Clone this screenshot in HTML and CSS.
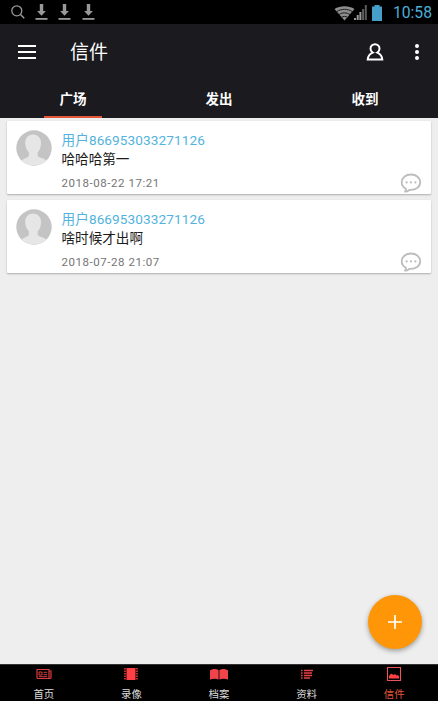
FILE: index.html
```html
<!DOCTYPE html>
<html lang="zh-CN">
<head>
    <meta charset="UTF-8">
    <meta name="viewport" content="width=device-width, initial-scale=1.0">
    <title>信件</title>
    <link rel="stylesheet" href="styles.css">
</head>
<body>
    <!-- 图标 -->
    <svg class="icon-defs" width="0" height="0">
        <symbol id="download" viewBox="0 0 13 17">
            <path d="M4.8 0h3.4v7h2.7L6.5 11.7 2.1 7h2.7z"/>
            <path d="M.5 14h12v1.8H.5z"/>
        </symbol>
        <symbol id="avatar" viewBox="0 0 36 36">
            <circle cx="18" cy="18" r="17.7" fill="#c4c4c4"/>
            <path d="M17 4.5c-5 0-7.8 3.6-7.8 8.5 0 4.5 2 7.5 3.7 9.3v3.2c0 2-3.9 2.4-7.2 4.9A17.7 17.7 0 0 0 30.3 30.4c-3.3-2.5-8.6-2.900-8.600-4.900v-3.200c1.700-1.800 3.400-4.800 3.400-9.300 0-4.900-3.100-8.500-8.100-8.500z" fill="#e6e6e6"/>
        </symbol>
        <symbol id="comment" viewBox="0 0 22 20">
            <path d="M11 1.5c-5.300 0-9.300 3.300-9.300 7.800 0 2.900 1.600 5.200 4.300 6.500-.1 1.200-.4 2-1 2.900 2 0 3.300-.8 4.300-1.900 6.300.6 10.900-2.800 10.900-7.500 0-4.500-3.900-7.800-9.200-7.800z" fill="none" stroke="#bdbdbf" stroke-width="1.8" stroke-linejoin="round"/>
            <circle cx="6.600" cy="9.400" r="1.100"/>
            <circle cx="11" cy="9.400" r="1.100"/>
            <circle cx="15.400" cy="9.400" r="1.100"/>
        </symbol>
    </svg>

    <!-- 状态栏 -->
    <div class="status-bar">
        <div class="status-left">
            <svg class="icon-search" width="15" height="15" viewBox="0 0 15 15">
                <circle cx="5.800" cy="5.800" r="5" fill="none" stroke="#999" stroke-width="1.300"/>
                <path d="M9.500 9.500l3.700 3.700" stroke="#999" stroke-width="1.500"/>
            </svg>
            <svg class="icon-download"><use href="#download"/></svg>
            <svg class="icon-download"><use href="#download"/></svg>
            <svg class="icon-download"><use href="#download"/></svg>
        </div>
        <div class="status-right">
            <svg class="icon-wifi" width="21" height="16" viewBox="0 0 21 16">
                <path d="M10.500 15.500L.5 4C6 .2 15 .2 20.500 4z" fill="#8d8d8d"/>
                <path d="M2.500 6.800c4.600-3.300 11.400-3.300 16 0M5 9.600c3.300-2.300 7.700-2.300 11 0M7.500 12.300c1.800-1.200 4.200-1.200 6 0" fill="none" stroke="#1c1c1c" stroke-width="1"/>
            </svg>
            <svg class="icon-signal" width="13" height="15" viewBox="0 0 13 15">
                <path d="M0 13h2v2H0zM2.700 10h2v5h-2zM5.400 7h2v8h-2z" fill="#999"/>
                <path d="M8.100 4h2v11h-2zM10.800 0h2v15h-2z" fill="#5c5c5c"/>
            </svg>
            <svg class="icon-battery" width="10" height="16" viewBox="0 0 10 16">
                <path d="M2.500 0h5v1.500H10V16H0V1.500h2.500z" fill="#459fc9"/>
            </svg>
            <span class="clock">10:58</span>
        </div>
    </div>

    <!-- 标题栏 -->
    <header class="header">
        <div class="toolbar">
            <svg class="icon-menu" width="18" height="14" viewBox="0 0 18 14">
                <path d="M0 1h18M0 7h18M0 13h18" stroke="#fff" stroke-width="2"/>
            </svg>
            <h1 class="title">信件</h1>
            <svg class="icon-user" width="18" height="18" viewBox="0 0 18 18">
                <path d="M6.700 9.600C5.300 8.700 4.500 7.400 4.500 5.700 4.500 3.100 6.500 1.200 9 1.200s4.500 1.900 4.500 4.500c0 1.700-.8 3-2.200 3.900 2.800 1 4.700 3.600 5 7H1.700c.3-3.400 2.200-6 5-7z" fill="none" stroke="#fff" stroke-width="2"/>
            </svg>
            <svg class="icon-more" width="4" height="16" viewBox="0 0 4 16">
                <circle cx="2" cy="2" r="2"/>
                <circle cx="2" cy="8" r="2"/>
                <circle cx="2" cy="14" r="2"/>
            </svg>
        </div>
        <nav class="tabs">
            <a class="tab active">广场</a>
            <a class="tab">发出</a>
            <a class="tab">收到</a>
        </nav>
    </header>

    <!-- 信件列表 -->
    <main class="list">
        <article class="card">
            <svg class="avatar"><use href="#avatar"/></svg>
            <div class="card-body">
                <div class="name">用户866953033271126</div>
                <div class="message">哈哈哈第一</div>
                <div class="date">2018-08-22 17:21</div>
            </div>
            <svg class="icon-comment"><use href="#comment"/></svg>
        </article>
        <article class="card">
            <svg class="avatar"><use href="#avatar"/></svg>
            <div class="card-body">
                <div class="name">用户866953033271126</div>
                <div class="message">啥时候才出啊</div>
                <div class="date">2018-07-28 21:07</div>
            </div>
            <svg class="icon-comment"><use href="#comment"/></svg>
        </article>
    </main>

    <button type="button" class="fab">
        <svg width="14" height="14" viewBox="0 0 14 14">
            <path d="M7 0v14M0 7h14" stroke="#fff" stroke-width="1.700"/>
        </svg>
    </button>

    <!-- 底部导航 -->
    <nav class="bottom-nav">
        <a class="nav-item">
            <svg width="16" height="16" viewBox="0 0 16 16">
                <path d="M1 3.500h12v9H2a1 1 0 0 1-1-1zM13 5h2v6.500a1 1 0 0 1-1 1h-1" fill="none" stroke="#d93b40" stroke-width="1.200"/>
                <path d="M3 6h3v3H3zM7.500 6.300H11M7.500 8.700H11M3 10.700h8" fill="none" stroke="#d93b40"/>
            </svg>
            <span>首页</span>
        </a>
        <a class="nav-item">
            <svg width="16" height="16" viewBox="0 0 16 16">
                <path d="M3.500 2h9v12h-9z" fill="#ff4146"/>
                <path d="M2 2v12M14 2v12" stroke="#e23b40" stroke-width="1.600" stroke-dasharray="1.500 1"/>
            </svg>
            <span>录像</span>
        </a>
        <a class="nav-item">
            <svg width="18" height="16" viewBox="0 0 18 16">
                <path d="M0 4.500C2.500 2.500 6 2.500 8.600 4v9.500C6 12.500 3 12.500 0 13.500zM9.400 4c2.600-1.500 6.100-1.500 8.600.5v9c-3-1-6-1-8.600 0z" fill="#f0444a"/>
            </svg>
            <span>档案</span>
        </a>
        <a class="nav-item">
            <svg width="16" height="16" viewBox="0 0 16 16">
                <path d="M5 4.500h9M5 7h8M5 9.500h8M5 12h6" stroke="#e64046" stroke-width="1.400"/>
                <path d="M2 4.500h1.600M2 7h1.600M2 9.500h1.600M2 12h1.600" stroke="#e64046" stroke-width="1.400"/>
            </svg>
            <span>资料</span>
        </a>
        <a class="nav-item active">
            <svg width="16" height="16" viewBox="0 0 16 16">
                <path d="M1.500 1.500h13v13h-13z" fill="none" stroke="#e8555a" stroke-width="1.100"/>
                <path d="M3 12.500V10l2.300-2.500L7.500 9 9 8l1.500 1.500L12 9l1 1.500v2z" fill="#ff4146"/>
            </svg>
            <span>信件</span>
        </a>
    </nav>
</body>
</html>
```

FILE: styles.css
```css
* {
    margin: 0;
    padding: 0;
    box-sizing: border-box;
}

body {
    height: 100vh;
    display: flex;
    flex-direction: column;
    overflow: hidden;
    background-color: #eee;
    font-family: Roboto, "Noto Sans CJK SC", sans-serif;
}

svg {
    display: block;
    flex: none;
}

.icon-defs {
    position: absolute;
}

.status-bar {
    height: 24px;
    display: flex;
    justify-content: space-between;
    align-items: center;
    padding: 1px 6px 0 11px;
    background-color: #000;
}

.status-left,
.status-right {
    display: flex;
    align-items: center;
}

.status-left {
    gap: 10.4px;
}

.icon-search {
    margin-right: -1.500px;
}

.icon-download {
    width: 13px;
    height: 17px;
    fill: #999;
}

.icon-wifi {
    margin-right: -1px;
}

.icon-signal {
    margin-right: 5px;
}

.icon-battery {
    margin-right: 11px;
}

.clock {
    color: #4caed9;
    font-size: 15.700px;
    line-height: 24px;
}

.header {
    height: 94px;
    background-color: #1b1a1f;
    color: #fff;
}

.toolbar {
    height: 56px;
    display: flex;
    align-items: center;
    padding: 0 19px 0 18px;
}

.title {
    margin-left: 34px;
    margin-right: auto;
    padding-top: 1px;
    font-size: 19px;
    font-weight: 400;
    line-height: 56px;
}

.icon-user {
    margin-right: 31px;
}

.icon-more {
    fill: #fff;
}

.tabs {
    height: 38px;
    display: grid;
    grid-template-columns: repeat(3, 1fr);
}

.tab {
    justify-self: center;
    width: 58px;
    height: 38px;
    text-align: center;
    font-size: 13.5px;
    font-weight: 700;
    line-height: 38px;
}

.tab.active {
    border-bottom: 2px solid #e2563a;
}

.list {
    flex: 1;
    display: flex;
    flex-direction: column;
    gap: 6px;
    padding: 3px 7px;
}

.card {
    height: 73px;
    display: flex;
    padding: 9px 9px 0;
    border-radius: 1px;
    background-color: #fff;
    box-shadow: 0 1px 2px rgba(0, 0, 0, 0.28);
}

.avatar {
    width: 36px;
    height: 36px;
}

.card-body {
    flex: 1;
    margin-left: 9.5px;
    padding-top: 1px;
}

.name {
    color: #54b3de;
    font-size: 13.6px;
    line-height: 19px;
    letter-spacing: 0.1px;
}

.message {
    color: #1c1c1c;
    font-size: 13.6px;
    line-height: 19px;
}

.date {
    margin-top: 7px;
    color: #757575;
    font-size: 11.5px;
    line-height: 14px;
    letter-spacing: 0.55px;
}

.icon-comment {
    align-self: flex-end;
    width: 22px;
    height: 20px;
    margin-bottom: 1px;
    fill: #bdbdbf;
}

.fab {
    position: absolute;
    right: 16px;
    bottom: 52px;
    width: 54px;
    height: 54px;
    display: flex;
    justify-content: center;
    align-items: center;
    border: none;
    border-radius: 50%;
    background-color: #ff9607;
    box-shadow: 0 2px 5px rgba(0, 0, 0, 0.35);
}

.bottom-nav {
    height: 37px;
    display: grid;
    grid-template-columns: repeat(5, 1fr);
    border-top: 1px solid #333;
    background-color: #000;
}

.nav-item {
    display: flex;
    flex-direction: column;
    align-items: center;
    padding-top: 1px;
    color: #ddd;
    font-size: 10.4px;
    line-height: 25px;
}

.nav-item.active {
    color: #e2563a;
}
```
